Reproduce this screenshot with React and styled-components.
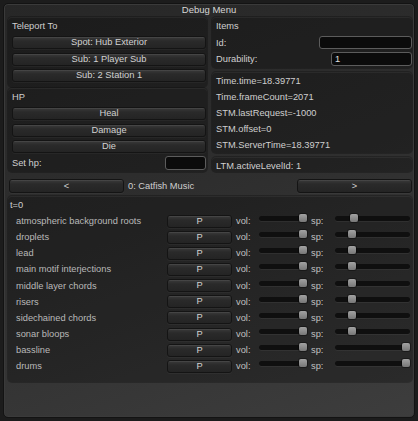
import React from "react";
import styled, { createGlobalStyle } from "styled-components";

const Global = createGlobalStyle`
  html, body { margin: 0; padding: 0; background: #1c1c1c; }
  body { font-family: "Liberation Sans", Arial, sans-serif; font-size: 9.3px; color: #cfcfcf; }
  * { box-sizing: border-box; }
`;

const Window = styled.div`
  margin: 3px 0 0 3px;
  width: 412px;
  height: 415px;
  border: 1px solid #131313;
  border-radius: 5px;
  box-shadow: inset 0 0 0 1px #3a3a3a;
  background: linear-gradient(160deg, #272727 0%, #2e2e2e 45%, #3d3d3d 100%);
  padding: 0 2px 0 4px;
  display: flex;
  flex-direction: column;
`;

const Title = styled.div`
  height: 13px;
  line-height: 11px;
  text-align: center;
  color: #d6d6d6;
  font-size: 9.5px;
  margin-left: -2px;
`;

const Top = styled.div`
  display: flex;
  gap: 5px;
`;

const Column = styled.div`
  display: flex;
  flex-direction: column;
  width: ${(p) => p.$w}px;
  gap: ${(p) => p.$gap}px;
`;

const Box = styled.div`
  background: rgba(0, 0, 0, 0.28);
  border-radius: 4px;
  box-shadow: inset 0 1px 0 rgba(255, 255, 255, 0.05), 0 0 0 1px rgba(0, 0, 0, 0.25);
  height: ${(p) => p.$h}px;
  padding: 1px ${(p) => p.$pr ?? 1}px 0 ${(p) => p.$pl ?? 4}px;
  display: flex;
  flex-direction: column;
`;

const Label = styled.div`
  height: ${(p) => p.$h ?? 15}px;
  line-height: ${(p) => p.$h ?? 15}px;
  white-space: nowrap;
`;

const Buttons = styled.div`
  display: flex;
  flex-direction: column;
  gap: 3.5px;
  margin-top: ${(p) => p.$mt}px;
`;

const Button = styled.div`
  height: ${(p) => p.$h ?? 13}px;
  width: ${(p) => (p.$w ? `${p.$w}px` : "auto")};
  flex: ${(p) => (p.$w ? "none" : "initial")};
  line-height: ${(p) => (p.$h ?? 13) - 2}px;
  text-align: center;
  border: 1px solid #141414;
  border-radius: 3px;
  background: linear-gradient(#4d4d4d 0px, #343434 1.5px, #2a2a2a 4px, #242424 100%);
  box-shadow: 0 1px 0 rgba(255, 255, 255, 0.04);
  color: #d2d2d2;
`;

const FieldRow = styled.div`
  display: flex;
  align-items: center;
  justify-content: space-between;
  height: ${(p) => p.$h}px;
  margin-top: ${(p) => p.$mt}px;
`;

const Field = styled.div`
  width: ${(p) => p.$w}px;
  height: ${(p) => p.$h}px;
  background: #0b0b0b;
  border: 1px solid #5c5c5c;
  border-radius: 3px;
  line-height: ${(p) => p.$h - 2}px;
  padding-left: 3px;
  color: #e0e0e0;
`;

const Line = styled.div`
  height: 16px;
  line-height: 16px;
  white-space: nowrap;
`;

const Nav = styled.div`
  display: flex;
  align-items: center;
  margin-top: 7px;
  padding-left: 1px;
  height: 14px;
`;

const NavLabel = styled.div`
  flex: 1;
  padding-left: 4px;
  white-space: nowrap;
`;

const Music = styled.div`
  margin-top: 3px;
  width: 404px;
  height: 186px;
  background: rgba(0, 0, 0, 0.28);
  border-radius: 4px;
  box-shadow: inset 0 1px 0 rgba(255, 255, 255, 0.05), 0 0 0 1px rgba(0, 0, 0, 0.25);
  padding: 2px 2px 0 2px;
  display: flex;
  flex-direction: column;
`;

const Row = styled.div`
  display: flex;
  align-items: center;
  height: 16.15px;
  padding-left: 6px;
`;

const TrackName = styled.div`
  width: 151px;
  color: #b9b9b9;
  white-space: nowrap;
`;

const SmallLabel = styled.div`
  width: ${(p) => p.$w}px;
  padding-left: ${(p) => p.$pl}px;
  color: #c0c0c0;
`;

const Slider = styled.div`
  position: relative;
  width: ${(p) => p.$w}px;
  height: 5px;
  margin-top: -5px;
  border-radius: 3px;
  background: #0f0f0f;
  box-shadow: 0 1px 0 rgba(255, 255, 255, 0.05);
`;

const Thumb = styled.div`
  position: absolute;
  top: -2px;
  width: 8px;
  height: 8px;
  border-radius: 2px;
  background: linear-gradient(#a2a2a2, #777);
  box-shadow: 0 0 0 1px rgba(0, 0, 0, 0.35);
`;

const tracks = [
  ["atmospheric background roots", 0.22],
  ["droplets", 0.2],
  ["lead", 0.2],
  ["main motif interjections", 0.2],
  ["middle layer chords", 0.2],
  ["risers", 0.2],
  ["sidechained chords", 0.2],
  ["sonar bloops", 0.2],
  ["bassline", 1],
  ["drums", 1],
];

function SliderBar({ w, v }) {
  return (
    <Slider $w={w}>
      <Thumb style={{ left: `${v * (w - 8)}px` }} />
    </Slider>
  );
}

export default function App() {
  return (
    <>
      <Global />
      <Window>
        <Title>Debug Menu</Title>
        <Top>
          <Column $w={199} $gap={1}>
            <Box $h={70}>
              <Label $h={16}>Teleport To</Label>
              <Buttons $mt={2}>
                <Button>Spot: Hub Exterior</Button>
                <Button>Sub: 1 Player Sub</Button>
                <Button>Sub: 2 Station 1</Button>
              </Buttons>
            </Box>
            <Box $h={84}>
              <Label $h={16}>HP</Label>
              <Buttons $mt={2}>
                <Button>Heal</Button>
                <Button>Damage</Button>
                <Button>Die</Button>
              </Buttons>
              <FieldRow $h={14} $mt={3}>
                <span>Set hp:</span>
                <Field $w={41} $h={14} />
              </FieldRow>
            </Box>
          </Column>
          <Column $w={200} $gap={4}>
            <Box $h={51} $pr={0}>
              <Label $h={16}>Items</Label>
              <FieldRow $h={13} $mt={2}>
                <span>Id:</span>
                <Field $w={93} $h={13} />
              </FieldRow>
              <FieldRow $h={14} $mt={3}>
                <span>Durability:</span>
                <Field $w={81} $h={14}>1</Field>
              </FieldRow>
            </Box>
            <Box $h={81}>
              <Line>Time.time=18.39771</Line>
              <Line>Time.frameCount=2071</Line>
              <Line>STM.lastRequest=-1000</Line>
              <Line>STM.offset=0</Line>
              <Line>STM.ServerTime=18.39771</Line>
            </Box>
            <Box $h={15}>
              <Label $h={16}>LTM.activeLevelId: 1</Label>
            </Box>
          </Column>
        </Top>
        <Nav>
          <Button $w={115} $h={14}>&lt;</Button>
          <NavLabel>0: Catfish Music</NavLabel>
          <Button $w={115} $h={14}>&gt;</Button>
        </Nav>
        <Music>
          <Label $h={15}>t=0</Label>
          {tracks.map(([name, sp]) => (
            <Row key={name}>
              <TrackName>{name}</TrackName>
              <Button $w={65}>P</Button>
              <SmallLabel $w={27} $pl={4}>vol:</SmallLabel>
              <SliderBar w={48} v={1} />
              <SmallLabel $w={28} $pl={4}>sp:</SmallLabel>
              <SliderBar w={75} v={sp} />
            </Row>
          ))}
        </Music>
      </Window>
    </>
  );
}
